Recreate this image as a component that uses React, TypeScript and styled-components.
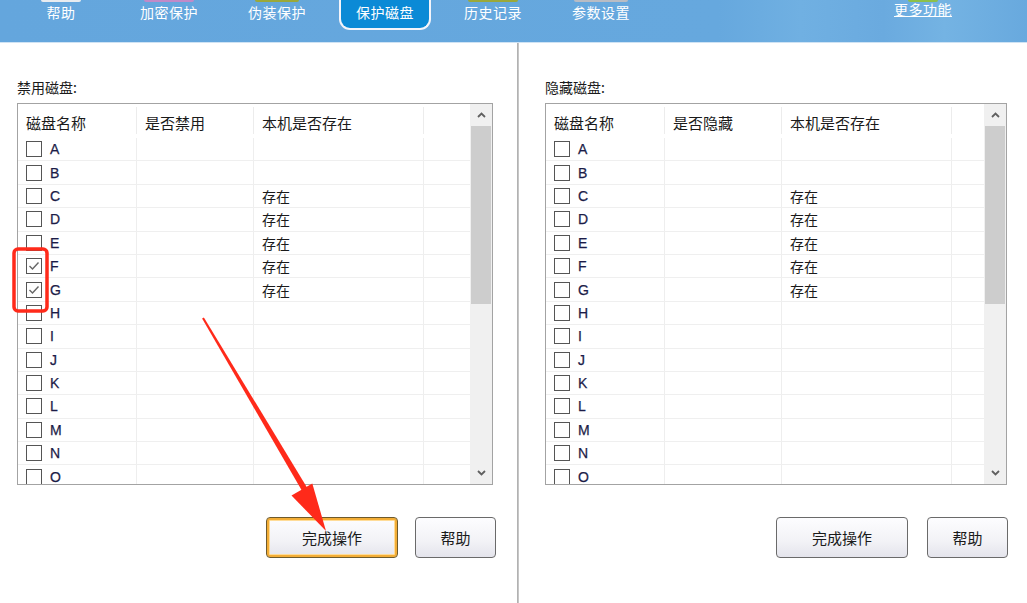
import React from "react";
import styled, { createGlobalStyle } from "styled-components";

const GlobalStyle = createGlobalStyle`
  html, body {
    margin: 0;
    padding: 0;
    background: #ffffff;
  }
  body {
    font-family: "Noto Sans CJK SC", "Noto Sans", "Liberation Sans", sans-serif;
    color: #1a1a1a;
  }
`;

const Page = styled.div`
  position: relative;
  width: 1027px;
  height: 603px;
  overflow: hidden;
  display: flex;
  flex-direction: column;
`;

const TopBar = styled.div`
  height: 42px;
  flex-shrink: 0;
  display: flex;
  align-items: flex-start;
  padding-left: 7px;
  background: linear-gradient(
    90deg,
    #64a6dd 0%,
    #66a8de 70%,
    #70b0e2 78%,
    #6aaadf 86%,
    #74b3e3 92%,
    #68a9de 100%
  );
  border-bottom: 1px solid #cfe3f4;
`;

const Tab = styled.div`
  width: 108px;
  height: 42px;
  display: flex;
  justify-content: center;
`;

const TabInner = styled.div<{ $active?: boolean }>`
  position: relative;
  width: 92px;
  height: ${(p) => (p.$active ? "33px" : "28px")};
  margin-top: ${(p) => (p.$active ? "-3px" : "0")};
  display: flex;
  justify-content: center;
  padding-top: ${(p) => (p.$active ? "3px" : "0")};
  box-sizing: border-box;
  background: ${(p) => (p.$active ? "#0b8ad6" : "transparent")};
  border: ${(p) => (p.$active ? "2px solid #f4f4fa" : "none")};
  border-top: none;
  border-radius: 0 0 11px 11px;
`;

const IconStub = styled.div<{ $color: string; $w: number }>`
  position: absolute;
  top: 0;
  left: 50%;
  width: ${(p) => p.$w}px;
  height: 2px;
  margin-left: ${(p) => -p.$w / 2}px;
  background: ${(p) => p.$color};
  border-radius: 0 0 4px 4px;
`;

const TabLabel = styled.span`
  margin-top: 2px;
  font-size: 14px;
  line-height: 20px;
  color: #ffffff;
  letter-spacing: 0.5px;
`;

const MoreLink = styled.a`
  position: relative;
  margin-left: auto;
  margin-right: 75px;
  margin-top: -1px;
  font-size: 14px;
  line-height: 20px;
  color: #ffffff;
  text-decoration: underline;
  letter-spacing: 0.5px;
`;

const Body = styled.div`
  flex: 1;
  display: flex;
`;

const Panel = styled.div<{ $width: number; $padLeft: number; $padRight: number }>`
  width: ${(p) => p.$width}px;
  flex-shrink: 0;
  box-sizing: border-box;
  padding: 34px ${(p) => p.$padRight}px 0 ${(p) => p.$padLeft}px;
  display: flex;
  flex-direction: column;
`;

const Divider = styled.div`
  width: 2px;
  flex-shrink: 0;
  background: linear-gradient(90deg, #a8a8a8, #d0d0d0);
`;

const PanelLabel = styled.div`
  font-size: 14px;
  line-height: 20px;
  margin-bottom: 6px;
  color: #1a1a1a;
`;

const TableBox = styled.div<{ $width: number }>`
  width: ${(p) => p.$width}px;
  height: 382px;
  box-sizing: border-box;
  border: 1px solid #a3a3a3;
  display: flex;
  background: #ffffff;
`;

const TableMain = styled.div`
  flex: 1;
  display: flex;
  flex-direction: column;
  overflow: hidden;
`;

const HeaderRow = styled.div<{ $cols: string }>`
  height: 34px;
  flex-shrink: 0;
  display: grid;
  grid-template-columns: ${(p) => p.$cols};
  align-items: stretch;
`;

const HeaderCell = styled.div<{ $last?: boolean }>`
  display: flex;
  align-items: center;
  padding: 4px 0 0 8px;
  font-size: 15px;
  color: #1a1a1a;
  border-right: ${(p) => (p.$last ? "none" : "1px solid #ececec")};
  margin: 3px 0 4px;
`;

const Rows = styled.div`
  flex: 1;
  overflow: hidden;
`;

const Row = styled.div<{ $cols: string }>`
  height: 23.4px;
  box-sizing: border-box;
  display: grid;
  grid-template-columns: ${(p) => p.$cols};
  border-bottom: 1px solid #efefef;
`;

const Cell = styled.div<{ $last?: boolean }>`
  display: flex;
  align-items: center;
  padding-left: 8px;
  font-size: 14px;
  color: #1a1a1a;
  border-right: ${(p) => (p.$last ? "none" : "1px solid #eeeeee")};
`;

const CheckBox = styled.span`
  width: 16px;
  height: 16px;
  box-sizing: border-box;
  border: 1px solid #555555;
  background: #ffffff;
  margin-right: 8px;
  display: flex;
  align-items: center;
  justify-content: center;
`;

const Letter = styled.span`
  font-family: "Liberation Sans", "DejaVu Sans", sans-serif;
  font-size: 14px;
  color: #1c1c48;
  -webkit-text-stroke: 0.25px #1c1c48;
`;

const ScrollBar = styled.div`
  width: 22px;
  flex-shrink: 0;
  background: #f0f0f0;
  display: flex;
  flex-direction: column;
  align-items: center;
`;

const ScrollArrow = styled.div`
  height: 22px;
  width: 100%;
  display: flex;
  align-items: center;
  justify-content: center;
  flex-shrink: 0;
`;

const Thumb = styled.div`
  width: 20px;
  height: 178px;
  background: #cdcdcd;
  margin-bottom: auto;
`;

const ButtonRow = styled.div<{ $gap: number }>`
  display: flex;
  justify-content: flex-end;
  gap: ${(p) => p.$gap}px;
  margin-top: 32px;
`;

const Button = styled.button<{ $width: number; $focused?: boolean }>`
  width: ${(p) => p.$width}px;
  height: 41px;
  box-sizing: border-box;
  border-radius: 4px;
  border: ${(p) => (p.$focused ? "1px solid #6e5a2c" : "1px solid #6a6a6a")};
  box-shadow: ${(p) =>
    p.$focused ? "inset 0 0 0 2px #f3ad36, inset 0 0 0 3px #ffdc98" : "none"};
  background: linear-gradient(180deg, #fdfdff 0%, #f2f2f6 60%, #e4e4ec 100%);
  font-family: "Noto Sans CJK SC", "Noto Sans", sans-serif;
  font-size: 15px;
  color: #1a1a1a;
  padding: 0;
  cursor: pointer;
`;

const Overlay = styled.svg`
  position: absolute;
  left: 0;
  top: 0;
  pointer-events: none;
`;

// the list is scrolled to the top; only A..O fit in view
const letters = "ABCDEFGHIJKLMNO".split("");
const existing = ["C", "D", "E", "F", "G"];

const tabs = [
  { label: "帮助", stub: "#e8ecf0", w: 40 },
  { label: "加密保护", stub: "#c08ac8", w: 50 },
  { label: "伪装保护", stub: "#9aa83a", w: 44 },
  { label: "保护磁盘", stub: "#5a6470", w: 54, active: true },
  { label: "历史记录", stub: "#9aa83a", w: 50 },
  { label: "参数设置", stub: "#b8bcc4", w: 54 },
];

const Check = () => (
  <svg width="12" height="10" viewBox="0 0 12 10">
    <path d="M1.5 5 L4.5 8 L10.5 1.5" fill="none" stroke="#666" strokeWidth="1.4" />
  </svg>
);

const Chevron = ({ up }: { up?: boolean }) => (
  <svg width="9" height="6" viewBox="0 0 9 6">
    <path
      d={up ? "M1 5 L4.5 1.5 L8 5" : "M1 1 L4.5 4.5 L8 1"}
      fill="none"
      stroke="#606060"
      strokeWidth="1.8"
    />
  </svg>
);

type DiskTableProps = {
  width: number;
  cols: string;
  flagTitle: string;
  checked: string[];
};

const DiskTable = ({ width, cols, flagTitle, checked }: DiskTableProps) => (
  <TableBox $width={width}>
    <TableMain>
      <HeaderRow $cols={cols}>
        <HeaderCell>磁盘名称</HeaderCell>
        <HeaderCell>{flagTitle}</HeaderCell>
        <HeaderCell>本机是否存在</HeaderCell>
        <HeaderCell $last />
      </HeaderRow>
      <Rows>
        {letters.map((l) => (
          <Row key={l} $cols={cols}>
            <Cell>
              <CheckBox>{checked.includes(l) && <Check />}</CheckBox>
              <Letter>{l}</Letter>
            </Cell>
            <Cell />
            <Cell>{existing.includes(l) ? "存在" : ""}</Cell>
            <Cell $last />
          </Row>
        ))}
      </Rows>
    </TableMain>
    <ScrollBar>
      <ScrollArrow>
        <Chevron up />
      </ScrollArrow>
      <Thumb />
      <ScrollArrow>
        <Chevron />
      </ScrollArrow>
    </ScrollBar>
  </TableBox>
);

const App = () => {
  return (
    <Page>
      <GlobalStyle />
      <TopBar>
        {tabs.map((t) => (
          <Tab key={t.label}>
            <TabInner $active={t.active}>
              <IconStub $color={t.stub} $w={t.w} style={t.active ? { top: -2 } : undefined} />
              <TabLabel>{t.label}</TabLabel>
            </TabInner>
          </Tab>
        ))}
        <MoreLink>
          <IconStub $color="#8cc04a" $w={30} style={{ top: 1 }} />
          更多功能
        </MoreLink>
      </TopBar>
      <Body>
        <Panel $width={517} $padLeft={17} $padRight={21}>
          <PanelLabel>禁用磁盘:</PanelLabel>
          <DiskTable
            width={476}
            cols="119px 117px 170px 1fr"
            flagTitle="是否禁用"
            checked={["F", "G"]}
          />
          <ButtonRow $gap={17}>
            <Button $width={132} $focused>
              完成操作
            </Button>
            <Button $width={81}>帮助</Button>
          </ButtonRow>
        </Panel>
        <Divider />
        <Panel $width={508} $padLeft={26} $padRight={19}>
          <PanelLabel>隐藏磁盘:</PanelLabel>
          <DiskTable
            width={462}
            cols="119px 117px 170px 1fr"
            flagTitle="是否隐藏"
            checked={[]}
          />
          <ButtonRow $gap={19}>
            <Button $width={132}>完成操作</Button>
            <Button $width={81}>帮助</Button>
          </ButtonRow>
        </Panel>
      </Body>
      <Overlay width="1027" height="603" viewBox="0 0 1027 603">
        <rect
          x="14"
          y="249"
          width="33"
          height="62"
          rx="4"
          fill="none"
          stroke="#ff2a1a"
          strokeWidth="3.5"
        />
        <polygon
          points="203.9,317.5 202.1,318.5 302.4,491.5 307.6,488.5"
          fill="#ff2a1a"
        />
        <polygon points="326,531 312.3,483.5 291.5,495.5" fill="#ff2a1a" />
      </Overlay>
    </Page>
  );
};

export default App;
